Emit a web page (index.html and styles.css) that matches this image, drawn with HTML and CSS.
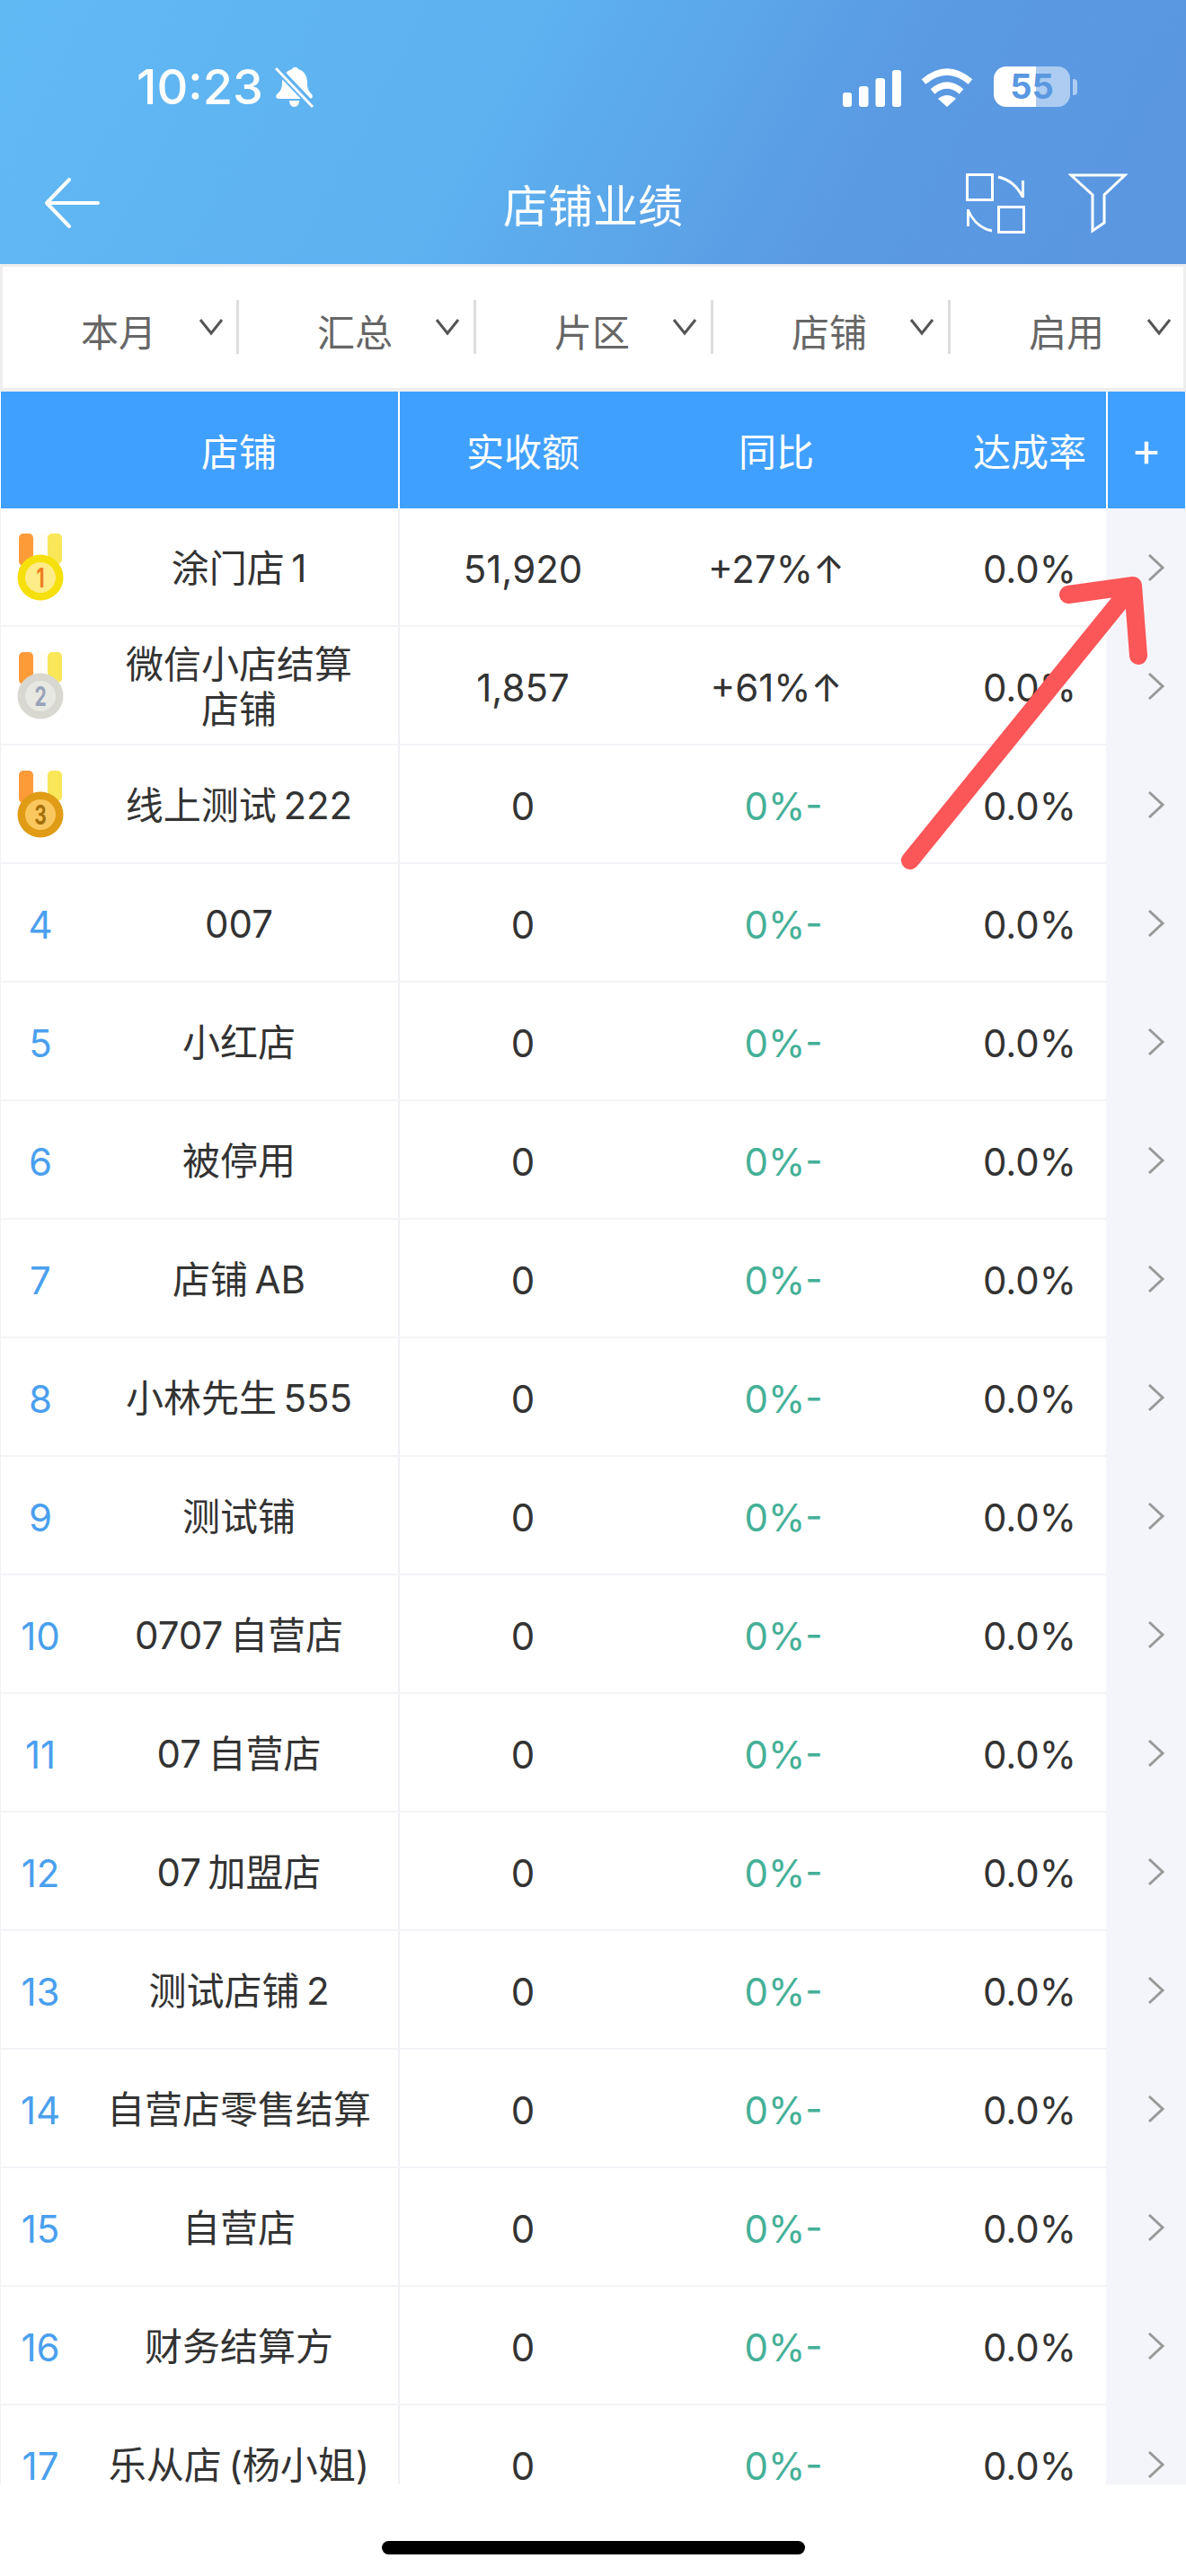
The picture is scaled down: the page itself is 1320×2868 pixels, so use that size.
FILE: index.html
```html
<!DOCTYPE html>
<html lang="zh-CN">
<head>
    <meta charset="UTF-8">
    <meta name="viewport" content="width=device-width, initial-scale=1.0">
    <title>店铺业绩</title>
    <link rel="stylesheet" href="styles.css">
</head>
<body>

    <div class="page">
        <!-- Blue header -->
        <div class="header">
            <div class="status">
                <div class="status-left">
                    <span class="time">10:23</span>
                    <svg class="bell" width="43" height="46" viewBox="0 0 43 46">
                        <path fill="#fff" d="M19 3c1-3 6-3 7 0 7 2 10 8 10 15 0 6 1 9 5 13 2 3 0 5-3 5H5c-3 0-5-2-3-5 4-3 6-7 6-13 0-7 4-13 11-15z"/>
                        <path fill="#fff" d="M16 38h11c0 4-2 7-5.500 7S16 42 16 38z"/>
                        <path stroke="#5fb1ef" stroke-width="8" d="M2 2l40 42"/>
                        <path stroke="#fff" stroke-width="3" d="M1 2l41 43"/>
                    </svg>
                </div>
                <div class="status-right">
                    <svg width="65" height="41" viewBox="0 0 65 41">
                        <rect x="0" y="25" width="10" height="16" rx="3" fill="#fff"/>
                        <rect x="18" y="18" width="10.500" height="23" rx="3" fill="#fff"/>
                        <rect x="36.500" y="9" width="10.500" height="32" rx="3" fill="#fff"/>
                        <rect x="55" y="0" width="10" height="41" rx="3" fill="#fff"/>
                    </svg>
                    <svg class="wifi" width="58" height="43" viewBox="0 0 58 43">
                        <path fill="none" stroke="#fff" stroke-width="7" d="M3 15Q29-7 55 15"/>
                        <path fill="none" stroke="#fff" stroke-width="7" d="M13 26Q29 12 45 26"/>
                        <path fill="#fff" d="M19 34Q29 26 39 34L29 43z"/>
                    </svg>
                    <div class="battery"><span>55</span></div>
                    <div class="battery-nub"></div>
                </div>
            </div>
            <div class="nav">
                <div class="nav-left">
                    <svg width="62" height="56" viewBox="0 0 62 56">
                        <path fill="none" stroke="#fff" stroke-width="4" stroke-linecap="round" stroke-linejoin="round" d="M60 28H3M28 2L3 28l25 26"/>
                    </svg>
                </div>
                <div class="nav-title">店铺业绩</div>
                <div class="nav-right">
                    <svg width="66" height="67" viewBox="0 0 66 67">
                        <g fill="none" stroke="#fff" stroke-width="3">
                            <rect x="1.500" y="1.500" width="28" height="28"/>
                            <rect x="36.500" y="37.500" width="28" height="28"/>
                            <path d="M36 4Q54 8 63 26M63.500 8v19"/>
                            <path d="M3 42Q11 60 29 64M2.500 40v19"/>
                        </g>
                    </svg>
                    <svg width="66" height="67" viewBox="0 0 66 67">
                        <path fill="none" stroke="#fff" stroke-width="3" d="M3 2h60L40 24v31l-13 9V24z"/>
                    </svg>
                </div>
            </div>
        </div>

        <!-- Filters -->
        <div class="filter-bar">
            <div class="filter-item"><span>本月</span><svg class="chev-down" width="28" height="20" viewBox="0 0 28 20"><path d="M2 2l12 15L26 2"/></svg></div>
            <div class="filter-item"><span>汇总</span><svg class="chev-down" width="28" height="20" viewBox="0 0 28 20"><path d="M2 2l12 15L26 2"/></svg></div>
            <div class="filter-item"><span>片区</span><svg class="chev-down" width="28" height="20" viewBox="0 0 28 20"><path d="M2 2l12 15L26 2"/></svg></div>
            <div class="filter-item"><span>店铺</span><svg class="chev-down" width="28" height="20" viewBox="0 0 28 20"><path d="M2 2l12 15L26 2"/></svg></div>
            <div class="filter-item"><span>启用</span><svg class="chev-down" width="28" height="20" viewBox="0 0 28 20"><path d="M2 2l12 15L26 2"/></svg></div>
        </div>

        <!-- Table -->
        <div class="table">
            <div class="table-head">
                <div class="col-store head-store">店铺</div>
                <div class="col-amount">实收额</div>
                <div class="col-yoy">同比</div>
                <div class="col-rate">达成率</div>
                <div class="col-add">+</div>
            </div>

            <div class="row">
                <div class="col-rank medal">
                    <svg width="52" height="75" viewBox="0 0 52 75">
                        <rect x="2" y="0" width="16" height="36" rx="5" fill="#fd9b39"/><rect x="34" y="0" width="16" height="34" rx="5" fill="#f9e759"/><rect x="18" y="0" width="16" height="30" fill="#fffdf6"/>
                        <circle cx="26" cy="49" r="25.500" fill="#f6e00c"/><circle cx="26" cy="49" r="17" fill="#fdec87"/>
                        <text class="medal-num" x="26" y="60" fill="#ee7d22">1</text>
                    </svg>
                </div>
                <div class="col-name">涂门店&#8201;1</div>
                <div class="col-amount">51,920</div>
                <div class="col-yoy">+27%↑</div>
                <div class="col-rate">0.0%</div>
                <div class="col-go"><svg class="chev" width="20" height="32" viewBox="0 0 20 32"><path d="M2 2l15 14L2 30"/></svg></div>
            </div>
            <div class="row">
                <div class="col-rank medal">
                    <svg width="52" height="75" viewBox="0 0 52 75">
                        <rect x="2" y="0" width="16" height="36" rx="5" fill="#fd9b39"/><rect x="34" y="0" width="16" height="34" rx="5" fill="#f9e759"/><rect x="18" y="0" width="16" height="30" fill="#fffdf6"/>
                        <circle cx="26" cy="49" r="25.500" fill="#d8d8d1"/><circle cx="26" cy="49" r="17" fill="#e8e8e2"/>
                        <text class="medal-num" x="26" y="60" fill="#98a2b8">2</text>
                    </svg>
                </div>
                <div class="col-name">微信小店结算<br>店铺</div>
                <div class="col-amount">1,857</div>
                <div class="col-yoy">+61%↑</div>
                <div class="col-rate">0.0%</div>
                <div class="col-go"><svg class="chev" width="20" height="32" viewBox="0 0 20 32"><path d="M2 2l15 14L2 30"/></svg></div>
            </div>
            <div class="row">
                <div class="col-rank medal">
                    <svg width="52" height="75" viewBox="0 0 52 75">
                        <rect x="2" y="0" width="16" height="36" rx="5" fill="#fd9b39"/><rect x="34" y="0" width="16" height="34" rx="5" fill="#f9e759"/><rect x="18" y="0" width="16" height="30" fill="#fffdf6"/>
                        <circle cx="26" cy="49" r="25.500" fill="#e09c17"/><circle cx="26" cy="49" r="17" fill="#fbc75f"/>
                        <text class="medal-num" x="26" y="60" fill="#a5700c">3</text>
                    </svg>
                </div>
                <div class="col-name">线上测试&#8201;222</div>
                <div class="col-amount">0</div>
                <div class="col-yoy zero">0%-</div>
                <div class="col-rate">0.0%</div>
                <div class="col-go"><svg class="chev" width="20" height="32" viewBox="0 0 20 32"><path d="M2 2l15 14L2 30"/></svg></div>
            </div>
            <div class="row">
                <div class="col-rank">4</div>
                <div class="col-name">007</div>
                <div class="col-amount">0</div>
                <div class="col-yoy zero">0%-</div>
                <div class="col-rate">0.0%</div>
                <div class="col-go"><svg class="chev" width="20" height="32" viewBox="0 0 20 32"><path d="M2 2l15 14L2 30"/></svg></div>
            </div>
            <div class="row">
                <div class="col-rank">5</div>
                <div class="col-name">小红店</div>
                <div class="col-amount">0</div>
                <div class="col-yoy zero">0%-</div>
                <div class="col-rate">0.0%</div>
                <div class="col-go"><svg class="chev" width="20" height="32" viewBox="0 0 20 32"><path d="M2 2l15 14L2 30"/></svg></div>
            </div>
            <div class="row">
                <div class="col-rank">6</div>
                <div class="col-name">被停用</div>
                <div class="col-amount">0</div>
                <div class="col-yoy zero">0%-</div>
                <div class="col-rate">0.0%</div>
                <div class="col-go"><svg class="chev" width="20" height="32" viewBox="0 0 20 32"><path d="M2 2l15 14L2 30"/></svg></div>
            </div>
            <div class="row">
                <div class="col-rank">7</div>
                <div class="col-name">店铺&#8201;AB</div>
                <div class="col-amount">0</div>
                <div class="col-yoy zero">0%-</div>
                <div class="col-rate">0.0%</div>
                <div class="col-go"><svg class="chev" width="20" height="32" viewBox="0 0 20 32"><path d="M2 2l15 14L2 30"/></svg></div>
            </div>
            <div class="row">
                <div class="col-rank">8</div>
                <div class="col-name">小林先生&#8201;555</div>
                <div class="col-amount">0</div>
                <div class="col-yoy zero">0%-</div>
                <div class="col-rate">0.0%</div>
                <div class="col-go"><svg class="chev" width="20" height="32" viewBox="0 0 20 32"><path d="M2 2l15 14L2 30"/></svg></div>
            </div>
            <div class="row">
                <div class="col-rank">9</div>
                <div class="col-name">测试铺</div>
                <div class="col-amount">0</div>
                <div class="col-yoy zero">0%-</div>
                <div class="col-rate">0.0%</div>
                <div class="col-go"><svg class="chev" width="20" height="32" viewBox="0 0 20 32"><path d="M2 2l15 14L2 30"/></svg></div>
            </div>
            <div class="row">
                <div class="col-rank">10</div>
                <div class="col-name">0707&#8201;自营店</div>
                <div class="col-amount">0</div>
                <div class="col-yoy zero">0%-</div>
                <div class="col-rate">0.0%</div>
                <div class="col-go"><svg class="chev" width="20" height="32" viewBox="0 0 20 32"><path d="M2 2l15 14L2 30"/></svg></div>
            </div>
            <div class="row">
                <div class="col-rank">11</div>
                <div class="col-name">07&#8201;自营店</div>
                <div class="col-amount">0</div>
                <div class="col-yoy zero">0%-</div>
                <div class="col-rate">0.0%</div>
                <div class="col-go"><svg class="chev" width="20" height="32" viewBox="0 0 20 32"><path d="M2 2l15 14L2 30"/></svg></div>
            </div>
            <div class="row">
                <div class="col-rank">12</div>
                <div class="col-name">07&#8201;加盟店</div>
                <div class="col-amount">0</div>
                <div class="col-yoy zero">0%-</div>
                <div class="col-rate">0.0%</div>
                <div class="col-go"><svg class="chev" width="20" height="32" viewBox="0 0 20 32"><path d="M2 2l15 14L2 30"/></svg></div>
            </div>
            <div class="row">
                <div class="col-rank">13</div>
                <div class="col-name">测试店铺&#8201;2</div>
                <div class="col-amount">0</div>
                <div class="col-yoy zero">0%-</div>
                <div class="col-rate">0.0%</div>
                <div class="col-go"><svg class="chev" width="20" height="32" viewBox="0 0 20 32"><path d="M2 2l15 14L2 30"/></svg></div>
            </div>
            <div class="row">
                <div class="col-rank">14</div>
                <div class="col-name">自营店零售结算</div>
                <div class="col-amount">0</div>
                <div class="col-yoy zero">0%-</div>
                <div class="col-rate">0.0%</div>
                <div class="col-go"><svg class="chev" width="20" height="32" viewBox="0 0 20 32"><path d="M2 2l15 14L2 30"/></svg></div>
            </div>
            <div class="row">
                <div class="col-rank">15</div>
                <div class="col-name">自营店</div>
                <div class="col-amount">0</div>
                <div class="col-yoy zero">0%-</div>
                <div class="col-rate">0.0%</div>
                <div class="col-go"><svg class="chev" width="20" height="32" viewBox="0 0 20 32"><path d="M2 2l15 14L2 30"/></svg></div>
            </div>
            <div class="row">
                <div class="col-rank">16</div>
                <div class="col-name">财务结算方</div>
                <div class="col-amount">0</div>
                <div class="col-yoy zero">0%-</div>
                <div class="col-rate">0.0%</div>
                <div class="col-go"><svg class="chev" width="20" height="32" viewBox="0 0 20 32"><path d="M2 2l15 14L2 30"/></svg></div>
            </div>
            <div class="row">
                <div class="col-rank">17</div>
                <div class="col-name">乐从店&#8201;(杨小姐)</div>
                <div class="col-amount">0</div>
                <div class="col-yoy zero">0%-</div>
                <div class="col-rate">0.0%</div>
                <div class="col-go"><svg class="chev" width="20" height="32" viewBox="0 0 20 32"><path d="M2 2l15 14L2 30"/></svg></div>
            </div>
        </div>

        <div class="home-area"><div class="home-bar"></div></div>

        <!-- Red annotation drawn over the table -->
        <svg class="annotation" width="300" height="340" viewBox="0 0 300 340">
            <path fill="none" stroke="#fb5658" stroke-width="20" stroke-linecap="round" stroke-linejoin="round" d="M18 326L266 20M194 30L266 20l6 78"/>
        </svg>
    </div>

</body>
</html>
```

FILE: styles.css
```css
body {
    margin: 0;
    background-color: #fff;
    font-family: Inter, "Noto Sans CJK SC", sans-serif;
    color: #333;
}

.page {
    position: relative;
    width: 1320px;
    height: 2868px;
    overflow: hidden;
}

/* Blue header */
.header {
    height: 294px;
    background: linear-gradient(118deg, #61b9f4 0%, #5db1ef 42%, #5a9ae3 72%, #5b96e0 100%);
    color: #fff;
}

.status {
    display: flex;
    justify-content: space-between;
    height: 46px;
    padding: 74px 121px 0 152px;
}

.status-left {
    display: flex;
    align-items: center;
}

.time {
    font-size: 54px;
    font-weight: 500;
    line-height: 46px;
}

.bell {
    margin-left: 13px;
}

.status-right {
    display: flex;
    align-items: flex-end;
    height: 45px;
}

.wifi {
    margin-left: 22px;
}

.battery {
    width: 85px;
    height: 45px;
    margin-left: 23px;
    border-radius: 14px;
    background: linear-gradient(to right, #fff 55%, rgba(255, 255, 255, 0.5) 55%);
    color: #5a98e1;
    font-size: 38px;
    font-weight: 700;
    line-height: 45px;
    text-align: center;
}

.battery-nub {
    width: 5px;
    height: 18px;
    margin: 0 0 13px 3px;
    border-radius: 0 4px 4px 0;
    background-color: rgba(255, 255, 255, 0.5);
}

.nav {
    display: grid;
    grid-template-columns: 1fr auto 1fr;
    align-items: center;
    height: 114px;
    margin-top: 49px;
}

.nav-left {
    display: flex;
    padding-left: 49px;
}

.nav-title {
    font-size: 50px;
}

.nav-right {
    display: flex;
    justify-content: flex-end;
    gap: 48px;
    padding-right: 65px;
}

/* Filters */
.filter-bar {
    display: flex;
    box-sizing: border-box;
    height: 142px;
    padding-top: 37px;
    border: 3px solid #eee;
    border-bottom-width: 4px;
    background-color: #fff;
    color: #666;
    font-size: 42px;
}

.filter-item {
    display: flex;
    align-items: center;
    box-sizing: border-box;
    flex: none;
    width: 264px;
    height: 60px;
    padding-left: 87px;
    border-right: 3px solid #ddd;
}

.filter-item:first-child {
    width: 263px;
}

.filter-item:last-child {
    border-right: 0;
}

.filter-item span {
    margin-top: 6px;
}

.chev-down {
    margin-left: 47px;
}

.chev-down path {
    fill: none;
    stroke: #555;
    stroke-width: 3;
}

/* Table */
.table {
    height: 2330px;
    overflow: hidden;
    font-size: 42px;
}

.table-head {
    display: flex;
    align-items: center;
    height: 130px;
    margin: 0 1px;
    background-color: #40a0ff;
    color: #fff;
    text-align: center;
}

.table-head > div {
    display: flex;
    align-items: center;
    justify-content: center;
    box-sizing: border-box;
    height: 100%;
    padding-bottom: 2px;
}

.table-head .head-store {
    width: 444px;
    padding-left: 88px;
    border-right: 2px solid #fff;
}

.row {
    display: flex;
    box-sizing: border-box;
    height: 132px;
    border-bottom: 2px solid #f3f4f8;
    border-left: 1px solid #f0f0f5;
    background-color: #fff;
}

.row > div {
    display: flex;
    align-items: center;
    justify-content: center;
    box-sizing: border-box;
    padding-top: 4px;
}

.row > .medal {
    padding-top: 0;
}

.col-rank {
    flex: none;
    width: 88px;
    color: #4a9fee;
}

.row > .col-name {
    flex: none;
    width: 356px;
    padding-right: 26px;
    padding-left: 26px;
    border-right: 2px solid #f0f0f5;
    line-height: 50px;
    text-align: center;
}

.col-amount {
    flex: none;
    width: 274px;
}

.col-yoy {
    flex: none;
    width: 290px;
}

.col-yoy.zero {
    padding-left: 16px;
    color: #45b097;
}

.col-rate {
    flex: none;
    width: 222px;
    padding-left: 52px;
}

.col-add {
    flex: 1;
    border-left: 2px solid #fff;
    font-size: 52px;
}

.row > .col-go {
    flex: 1;
    align-self: stretch;
    margin-bottom: -2px;
    padding-top: 0;
    padding-left: 23px;
    background-color: #f4f5fa;
}

.chev path {
    fill: none;
    stroke: #999;
    stroke-width: 3;
}

.medal-num {
    font-size: 30px;
    font-weight: 700;
    text-anchor: middle;
    transform-box: fill-box;
    transform-origin: center;
    transform: scaleX(0.7);
}

/* Home indicator */
.home-area {
    display: flex;
    justify-content: center;
    padding-top: 63px;
}

.home-bar {
    width: 471px;
    height: 15px;
    border-radius: 8px;
    background-color: #000;
}

/* Arrow annotation */
.annotation {
    position: absolute;
    top: 632px;
    left: 995px;
}
```
